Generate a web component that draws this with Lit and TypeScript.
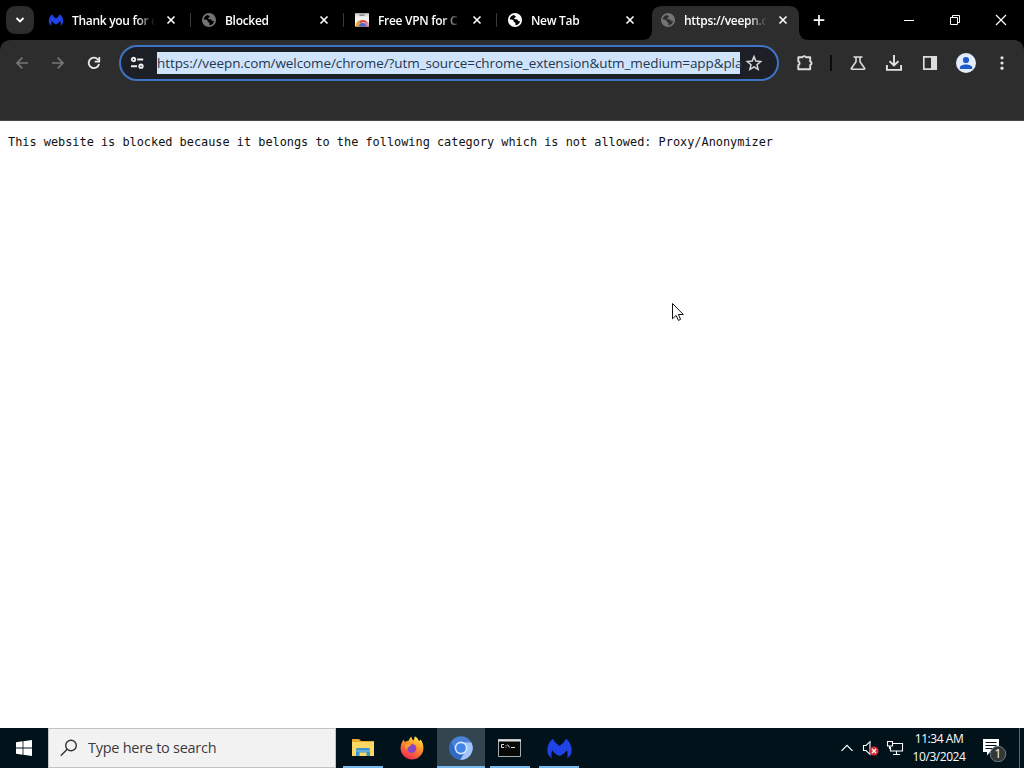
import { LitElement, html, css, svg } from 'lit';
import { customElement, property } from 'lit/decorators.js';
import { classMap } from 'lit/directives/class-map.js';

const globe = svg`
  <circle cx="8" cy="8" r="6.2" fill="none" stroke="currentColor" stroke-width="1.7"/>
  <path d="M2 7.2c2 .2 3.400 .3 4.200 1.100s.2 1.700 1.300 2c1 .3 1.200 1 .9 3.800L5 13.300 2.200 10zM7.500 1.800c-.6 1.400-.2 2 .8 2.200s.3 1.500-.6 1.700c-.8.2-.7 1.400.3 1.500 1.500.1 2.500.2 3 1.200s1.300 1 2.700.6c.3-2.800-.7-5.300-3-6.500z" fill="currentColor"/>`;

const malware = svg`
  <path d="M3.400 13.800C1.500 12.600.6 10.800.8 8.600 1 5.800 2.200 3.500 4.200 2.200c.5 1.500 1.900 2.900 3.800 4.200 1.900-1.300 3.300-2.700 3.800-4.200 2 1.300 3.200 3.600 3.400 6.400.2 2.200-.7 4-2.600 5.200.3-1.700.3-3.200-.2-4.800-1.100 1.500-2.600 2.700-4.400 3.500-1.800-.8-3.300-2-4.400-3.500-.5 1.600-.5 3.100-.2 4.800z" fill="#1f43e6"/>`;

const store = svg`
  <path d="M1 1.500h14v13H1z" fill="#f4f1ee"/>
  <path d="M1 1.500h14v3H1z" fill="#dcdcdc"/>
  <path d="M5.500 2.500h5v1.200h-5z" fill="#6f6f6f"/>
  <path d="M2 14.500a6.500 6.500 0 0 1 12.500-2.500L9 10z" fill="#d9483b"/>
  <path d="M2 14.500a6 6 0 0 1 3-6l2.500 4-.5 2z" fill="#e5a23e"/>
  <path d="M9 10.500h5.300c.5 1.300.7 2.600.7 4H8z" fill="#d58bb5"/>
  <path d="M5 14.500a3.500 3.500 0 0 1 7 0z" fill="#4b69c8"/>`;

const icons: Record<string, unknown> = { globe, malware, store };

@customElement('browser-tab')
export class BrowserTab extends LitElement {
  static styles = css`
    :host {
      display: block;
      width: 153px;
      height: 40px;
    }
    .tab {
      display: flex;
      align-items: center;
      height: 40px;
      box-sizing: border-box;
      padding-left: 11px;
      color: #fff;
      font: 600 12px/16px "Open Sans", "Noto Sans", sans-serif;
      background: linear-gradient(#3c3c3c, #3c3c3c) left 13px / 1px 14px no-repeat;
    }
    .tab.first {
      background: none;
    }
    .tab.active {
      background: none;
      position: relative;
    }
    .shape {
      position: absolute;
      left: -7px;
      top: 6px;
    }
    .icon {
      width: 16px;
      height: 16px;
      flex: none;
      position: relative;
    }
    .dim {
      color: #747474;
    }
    .title {
      position: relative;
      top: 1px;
      margin-left: 8px;
      width: 83px;
      white-space: nowrap;
      letter-spacing: -0.3px;
      -webkit-mask-image: linear-gradient(90deg, #000 78%, transparent 100%);
      mask-image: linear-gradient(90deg, #000 78%, transparent 100%);
    }
    .close {
      position: relative;
      margin-left: 8px;
      width: 16px;
      height: 16px;
    }
  `;

  @property() label = '';
  @property() icon = 'globe';
  @property({ type: Boolean }) dim = false;
  @property({ type: Boolean }) active = false;
  @property({ type: Boolean }) first = false;

  render() {
    return html`
      <div class=${classMap({ tab: true, active: this.active, first: this.first })}>
        ${this.active
          ? html`<svg class="shape" width="168" height="34">
              <path d="M0 34q10 0 10-10V10Q10 0 20 0h127q10 0 10 10v14q0 10 10 10z" fill="#2d2d2d"/>
            </svg>`
          : ''}
        <svg class=${classMap({ icon: true, dim: this.dim })} viewBox="0 0 16 16">${icons[this.icon]}</svg>
        <span class="title">${this.label}</span>
        <svg class="close" viewBox="0 0 16 16">
          <path d="M4.500 4.500l7 7m0-7l-7 7" stroke="#fff" stroke-width="1.600"/>
        </svg>
      </div>
    `;
  }
}

@customElement('app-root')
export class AppRoot extends LitElement {
  static styles = css`
    :host {
      display: flex;
      flex-direction: column;
      width: 1024px;
      height: 768px;
      overflow: hidden;
      background: #fefefe;
      position: relative;
    }
    svg {
      display: block;
      flex: none;
    }
    .strip {
      display: flex;
      align-items: center;
      height: 40px;
      background: #000;
    }
    .tab-search {
      display: grid;
      place-items: center;
      width: 28px;
      height: 28px;
      margin: 0 3px 0 6px;
      border-radius: 9px;
      background: #2d2d2d;
    }
    .new-tab {
      margin-left: 9px;
    }
    .window-buttons {
      display: flex;
      margin-left: auto;
    }
    .chrome {
      height: 81px;
      background: #000;
    }
    .toolbar {
      display: flex;
      align-items: center;
      height: 81px;
      box-sizing: border-box;
      padding: 0 4px 35px;
      border-radius: 10px 10px 0 0;
      background: #2d2d2d;
      border-bottom: 1px solid #484848;
    }
    .nav {
      display: flex;
    }
    .omnibox {
      display: flex;
      align-items: center;
      box-sizing: border-box;
      width: 661px;
      height: 36px;
      margin-left: 7px;
      padding-left: 8px;
      border: 2px solid #3f74c4;
      border-radius: 18px;
      background: #1c1f26;
    }
    .url {
      width: 583px;
      height: 22px;
      margin-left: 10px;
      white-space: nowrap;
      background: #cfe4fb;
      color: #26364f;
      font: 13.500px/22px "Open Sans", "Noto Sans", sans-serif;
      letter-spacing: -0.09px;
    }
    .star {
      margin-left: 5px;
    }
    .actions {
      display: flex;
      align-items: center;
      margin-left: 8px;
    }
    .divider {
      width: 2px;
      height: 16px;
      margin: 0 8px 0 7px;
      background: #0c0c0c;
    }
    .page {
      flex: 1;
      padding: 13px 8px 0;
    }
    pre {
      margin: 0;
      color: #111;
      font: 11.885px/16px "DejaVu Sans Mono", monospace;
    }
    .cursor {
      position: absolute;
      left: 671px;
      top: 302px;
    }
    .taskbar {
      display: flex;
      height: 40px;
      background: #01121b;
    }
    .start {
      display: grid;
      place-items: center;
      width: 48px;
    }
    .search {
      display: flex;
      align-items: center;
      box-sizing: border-box;
      width: 288px;
      padding-left: 11px;
      gap: 10px;
      border: 1px solid #bfc3c5;
      background: #f2f2f2;
      color: #3c3c3c;
      font: 14.500px/20px "Open Sans", "Noto Sans", sans-serif;
      letter-spacing: -0.27px;
    }
    .apps {
      display: flex;
      gap: 1px;
      margin-left: 3px;
    }
    .app {
      display: grid;
      place-items: center;
      box-sizing: border-box;
      width: 48px;
      height: 40px;
    }
    .running {
      background: linear-gradient(#76b9ed, #76b9ed) center bottom / 40px 2px no-repeat;
    }
    .current {
      background: linear-gradient(#76b9ed, #76b9ed) center bottom / 48px 2px no-repeat #33464f;
    }
    .tray {
      display: flex;
      align-items: center;
      margin-left: auto;
    }
    .clock {
      width: 64px;
      color: #fff;
      text-align: center;
      font: 12px/18px "Open Sans", "Noto Sans", sans-serif;
      letter-spacing: -0.45px;
    }
    .notice {
      margin-left: 9px;
    }
    .notice text {
      font: 12px "Open Sans", "Noto Sans", sans-serif;
    }
    .peek {
      width: 4px;
      height: 40px;
      margin-left: 11px;
      border-left: 1px solid #5a656b;
    }
  `;

  private button(content: unknown) {
    return html`<svg width="36" height="36" viewBox="0 0 36 36" fill="none">${content}</svg>`;
  }

  private renderTabs() {
    return html`
      <div class="strip">
        <div class="tab-search">
          <svg width="12" height="12" fill="none"><path d="M2.500 4l3.500 3.500L9.500 4" stroke="#fff" stroke-width="1.900"/></svg>
        </div>
        <browser-tab first icon="malware" label="Thank you for d"></browser-tab>
        <browser-tab dim label="Blocked"></browser-tab>
        <browser-tab icon="store" label="Free VPN for C"></browser-tab>
        <browser-tab label="New Tab"></browser-tab>
        <browser-tab active dim label="https://veepn.c"></browser-tab>
        <svg class="new-tab" width="16" height="16"><path d="M8 3v10.500M2.700 8.200h10.600" stroke="#fff" stroke-width="1.700"/></svg>
        <div class="window-buttons">
          <svg width="46" height="40"><path d="M18 20.500h10" stroke="#fff"/></svg>
          <svg width="46" height="40" fill="none" stroke="#fff"><path d="M18.500 17.500h7v7h-7zM20.500 17v-1.500h7v7h-1.500"/></svg>
          <svg width="46" height="40"><path d="M18 15l10 10m0-10l-10 10" stroke="#fff" stroke-width="1.200"/></svg>
        </div>
      </div>
    `;
  }

  private renderToolbar() {
    return html`
      <div class="chrome">
        <div class="toolbar">
          <div class="nav">
            ${this.button(svg`<path d="M24 18H13m5.300-5.300L13 18l5.300 5.300" stroke="#777" stroke-width="1.700"/>`)}
            ${this.button(svg`<path d="M12 18h11m-5.300-5.300L23 18l-5.300 5.300" stroke="#777" stroke-width="1.700"/>`)}
            ${this.button(svg`
              <path d="M23 19a5.200 5.200 0 1 1-1.300-4.700l1.300 1.400" stroke="#e8e8e8" stroke-width="1.800"/>
              <path d="M23.300 12v4.600h-4.600" stroke="#e8e8e8" stroke-width="1.700"/>`)}
          </div>
          <div class="omnibox">
            <svg width="18" height="18" fill="none" stroke="#eee" stroke-width="1.900">
              <circle cx="4.500" cy="5.500" r="1.700"/>
              <path d="M8.200 5.500h6M2 12.200h6"/>
              <circle cx="12" cy="12.200" r="1.700"/>
            </svg>
            <div class="url">https://veepn.com/welcome/chrome/?utm_source=chrome_extension&amp;utm_medium=app&amp;pla</div>
            <svg class="star" width="18" height="18" fill="none">
              <path d="M9 2.600l1.800 4.500 4.900.4-3.700 3.200 1.100 4.700L9 12.800l-4.100 2.600L6 10.700 2.300 7.500l4.900-.4z" stroke="#d4d6da" stroke-width="1.500"/>
            </svg>
          </div>
          <div class="actions">
            ${this.button(svg`
              <path d="M11.300 12.300h4.200a1.800 1.800 0 0 1 3.400 0h4.300v4.200a1.800 1.800 0 0 1 0 3.500v4.200H11.300v-4a2.100 2.100 0 0 0 0-3.900z" stroke="#ddd" stroke-width="1.900" stroke-linejoin="round"/>`)}
            <div class="divider"></div>
            ${this.button(svg`
              <path d="M13.500 12h9M16 12v4.800l-4.600 6.400c-.3.500 0 1 .5 1h12.200c.5 0 .8-.5.5-1L20 16.800V12" stroke="#ddd" stroke-width="1.600"/>`)}
            ${this.button(svg`
              <path d="M18 10v10.500m-4.500-4.400l4.500 4.400 4.500-4.400M10.900 20v4.900h14.200V20" stroke="#e4e4e4" stroke-width="1.900"/>`)}
            ${this.button(svg`
              <path d="M11.800 11.800h12.400v12.400H11.800z" stroke="#ddd" stroke-width="1.700"/>
              <path d="M19 11.500h5.500v13H19z" fill="#ddd"/>`)}
            ${this.button(svg`
              <circle cx="18" cy="18" r="10" fill="#e4ebfb"/>
              <circle cx="18" cy="15" r="3.100" fill="#1b5ac8"/>
              <path d="M11.800 24v-1.300c0-2.300 3.500-3.300 6.200-3.300s6.200 1 6.200 3.300V24z" fill="#1b5ac8"/>`)}
            ${this.button(svg`
              <g fill="#e4e4e4"><circle cx="18" cy="12.800" r="1.600"/><circle cx="18" cy="18" r="1.600"/><circle cx="18" cy="23.200" r="1.600"/></g>`)}
          </div>
        </div>
      </div>
    `;
  }

  private renderTaskbar() {
    return html`
      <div class="taskbar">
        <div class="start">
          <svg width="16" height="16" fill="#fff"><path d="M0 2.200l6.600-.9v6.300H0zM7.400 1.200L16 0v7.600H7.400zM0 8.400h6.600v6.300L0 13.800zM7.400 8.400H16V16l-8.600-1.200z"/></svg>
        </div>
        <div class="search">
          <svg width="18" height="18" fill="none" stroke="#333" stroke-width="1.400"><circle cx="11" cy="6.500" r="5.300"/><path d="M7.200 10.300L.8 16.700"/></svg>
          <span>Type here to search</span>
        </div>
        <div class="apps">
          <div class="app running">
            <svg width="24" height="24">
              <path d="M1 3h7l2 2h13v15H1z" fill="#e9a92d"/>
              <path d="M1 6h22v14H1z" fill="#fbd864"/>
              <path d="M5 20v-6.500q0-1.500 1.500-1.500h11q1.500 0 1.500 1.500V20h-3.500v-3.500h-7V20z" fill="#3b93cd"/>
              <path d="M5 15h14" stroke="#8cc8e8"/>
            </svg>
          </div>
          <div class="app">
            <svg width="24" height="24">
              <defs>
                <linearGradient id="fox" x1=".8" y1="0" x2=".3" y2="1">
                  <stop offset="0" stop-color="#fff04a"/><stop offset=".4" stop-color="#ff9828"/><stop offset="1" stop-color="#f0264f"/>
                </linearGradient>
              </defs>
              <path d="M1 9c.4-2.300 1.500-4 3-5.500l.8 2.700c1.400-1.200 2.600-1.700 4-1.800C9.400 2.700 10.300 1.200 11.500.5c-.2 1.900.7 2.700 2.200 3.900L14.800.3c2.200 1.200 3.500 2.700 4.200 4.900l1.600-1.700C22.600 6 23.500 9 23.400 12.500A11.400 11.400 0 0 1 12 23.500 11.400 11.400 0 0 1 1 9z" fill="url(#fox)"/>
              <circle cx="11.800" cy="12.500" r="4.500" fill="#8a45c8"/>
              <path d="M5 8.500c2-1.300 5-.9 7 .5-1.500.2-2.500 1-2.700 1.800-1.500.3-2.600 1.700-1.800 3.200-2-.8-3-3-2.500-5.500z" fill="#ff9a2c"/>
            </svg>
          </div>
          <div class="app current">
            <svg width="24" height="24">
              <circle cx="12" cy="12" r="11.700" fill="#4a82da"/>
              <path d="M12 6.500h10.300A11.700 11.700 0 0 1 11 23.700L16.800 15z" fill="#a3c5fa"/>
              <path d="M2 6A11.700 11.700 0 0 0 11 23.700l5-8.500-8.600-.2z" fill="#2f6bc4"/>
              <circle cx="12" cy="12" r="6.400" fill="#d9e7fd"/>
              <circle cx="12" cy="12" r="4.800" fill="#4285ea"/>
            </svg>
          </div>
          <div class="app running">
            <svg width="24" height="24" fill="none">
              <path d="M.5 3.500h22v17H.5z" fill="#080808" stroke="#a8adb0"/>
              <path d="M0 4.500h23" stroke="#dedede" stroke-width="2"/>
              <path d="M6 8.500H3.500v3H6M8 9v.8m0 1v.8m1.500-3.100l2 3M13 11.500h4" stroke="#ddd"/>
            </svg>
          </div>
          <div class="app running">
            <svg width="27" height="27" viewBox="0 0 16 16">${malware}</svg>
          </div>
        </div>
        <div class="tray">
          <svg width="24" height="24" fill="none"><path d="M6.500 14.800L12 9.300l5.500 5.500" stroke="#fff" stroke-width="1.200"/></svg>
          <svg width="24" height="24" fill="none">
            <path d="M4.500 9.500H7l4-3.800v12.600l-4-3.800H4.500z" stroke="#fff" stroke-width="1.100"/>
            <circle cx="15" cy="15" r="4.500" fill="#d92f38"/>
            <path d="M13 13l4 4m0-4l-4 4" stroke="#fff" stroke-width="1.400"/>
          </svg>
          <svg width="24" height="24" fill="none" stroke="#fff" stroke-width="1.100">
            <path d="M9.500 7.500h10v7.500H7.500V11M13.500 15v3M10 18.500h7M4.500 5.500h5V10h-5zM6.500 10v3"/>
          </svg>
          <div class="clock">11:34 AM<br />10/3/2024</div>
          <svg class="notice" width="28" height="28">
            <path d="M3 5h16v13h-9l-3 3.500V18H3z" fill="#fff"/>
            <path d="M5.500 8.500h11M5.500 11.500h11M5.500 14.500h7" stroke="#01121b"/>
            <circle cx="18" cy="20" r="7.800" fill="#30383b" stroke="#70787b"/>
            <text x="18" y="24.300" text-anchor="middle" fill="#fff">1</text>
          </svg>
          <div class="peek"></div>
        </div>
      </div>
    `;
  }

  render() {
    return html`
      ${this.renderTabs()}
      ${this.renderToolbar()}
      <div class="page">
        <pre>This website is blocked because it belongs to the following category which is not allowed: Proxy/Anonymizer</pre>
      </div>
      ${this.renderTaskbar()}
      <svg class="cursor" width="14" height="21">
        <path d="M1.500 1.500v15.300l3.600-3.400 2.300 5 2.200-1-2.200-4.900h4.900z" fill="#fff" stroke="#111"/>
      </svg>
    `;
  }
}
